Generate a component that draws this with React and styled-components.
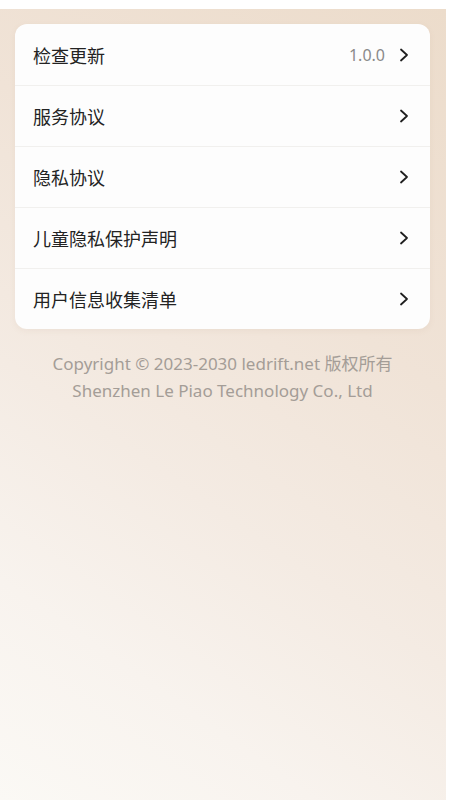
import React from 'react';
import styled, { createGlobalStyle } from 'styled-components';

const GlobalStyle = createGlobalStyle`
  html, body {
    margin: 0;
    padding: 0;
    background: #ffffff;
  }
  body {
    font-family: "Noto Sans", "Noto Sans CJK SC", sans-serif;
  }
`;

const items = [
  { label: '检查更新', value: '1.0.0' },
  { label: '服务协议' },
  { label: '隐私协议' },
  { label: '儿童隐私保护声明' },
  { label: '用户信息收集清单' },
];

function Chevron() {
  return (
    <svg width="10" height="14" viewBox="0 0 10 14" fill="none">
      <path d="M2 1.5 L8 7 L2 12.5" stroke="#1f1f1f" strokeWidth="1.8" strokeLinecap="round" strokeLinejoin="round" />
    </svg>
  );
}

function App() {
  return (
    <>
      <GlobalStyle />
      <Page>
        <Card>
          {items.map((item, i) => (
            <Row key={item.label} last={i === items.length - 1}>
              <Label>{item.label}</Label>
              <Right>
                {item.value && <Value>{item.value}</Value>}
                <Chevron />
              </Right>
            </Row>
          ))}
        </Card>
        <Footer>
          <FooterLine>Copyright © 2023-2030 ledrift.net 版权所有</FooterLine>
          <FooterLine>Shenzhen Le Piao Technology Co., Ltd</FooterLine>
        </Footer>
      </Page>
    </>
  );
}

const Page = styled.div`
  margin-top: 9px;
  width: 446px;
  min-height: 791px;
  box-sizing: border-box;
  padding: 15px 16px 0 15px;
  background: linear-gradient(215deg, #ecdccb 0%, #f0e3d7 35%, #f4ebe3 60%, #f8f3ee 80%, #fbf9f5 100%);
`;

const Card = styled.div`
  background: #fdfdfd;
  border-radius: 12px;
  overflow: hidden;
  box-shadow: 0 2px 6px rgba(160, 130, 100, 0.08);
`;

const Row = styled.div`
  display: flex;
  align-items: center;
  justify-content: space-between;
  height: 60px;
  padding: 0 21px 0 18px;
  border-bottom: ${props => props.last ? 'none' : '1px solid #f1f0ee'};
  &:first-child {
    height: 61px;
  }
`;

const Label = styled.span`
  font-size: 18px;
  color: #232323;
  font-family: "Noto Sans CJK SC", sans-serif;
`;

const Right = styled.div`
  display: flex;
  align-items: center;
  gap: 14px;
`;

const Value = styled.span`
  font-size: 16px;
  color: #8a8a8a;
`;

const Footer = styled.div`
  display: flex;
  flex-direction: column;
  align-items: center;
  margin-top: 21px;
`;

const FooterLine = styled.div`
  font-size: 17px;
  line-height: 27px;
  color: #a49d97;
  font-family: "Noto Sans", "Noto Sans CJK SC", sans-serif;
`;

export default App;
